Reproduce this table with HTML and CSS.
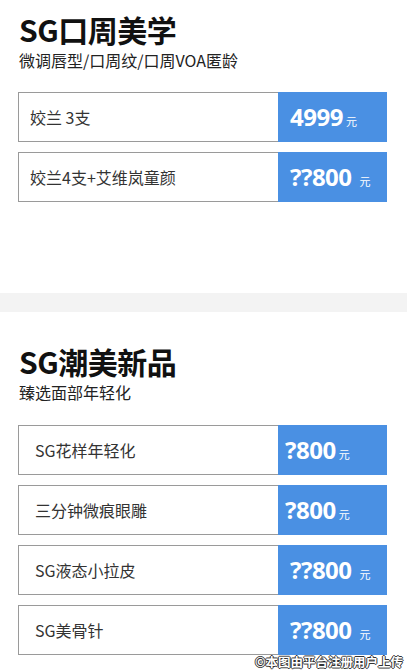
FILE: index.html
```html
<!DOCTYPE html>
<html lang="zh">
<head>
<meta charset="utf-8">
<link rel="stylesheet" href="styles.css">
</head>
<body>
<div class="page">
  <section class="sec sec-1">
    <h1 class="title">SG口周美学</h1>
    <p class="sub">微调唇型/口周纹/口周VOA匿龄</p>
    <div class="list">
      <div class="row"><div class="name">姣兰 3支</div><div class="price"><span class="num">4999</span><span class="unit">元</span></div></div>
      <div class="row"><div class="name">姣兰4支+艾维岚童颜</div><div class="price"><span class="num">??800</span><span class="unit sp">元</span></div></div>
    </div>
  </section>
  <div class="band"></div>
  <section class="sec sec-2">
    <h1 class="title">SG潮美新品</h1>
    <p class="sub">臻选面部年轻化</p>
    <div class="list list-2">
      <div class="row"><div class="name">SG花样年轻化</div><div class="price p2"><span class="num">?800</span><span class="unit">元</span></div></div>
      <div class="row"><div class="name">三分钟微痕眼雕</div><div class="price p2"><span class="num">?800</span><span class="unit">元</span></div></div>
      <div class="row"><div class="name">SG液态小拉皮</div><div class="price"><span class="num">??800</span><span class="unit sp">元</span></div></div>
      <div class="row"><div class="name">SG美骨针</div><div class="price"><span class="num">??800</span><span class="unit sp">元</span></div></div>
    </div>
  </section>
  <div class="wm">©本图由平台注册用户上传</div>
</div>
</body>
</html>
```
FILE: styles.css
```css
* { box-sizing: border-box; }
html, body { margin: 0; padding: 0; background: #fff; }
body {
  width: 407px;
  height: 670px;
  overflow: hidden;
  font-family: "Noto Sans CJK SC", "Noto Sans", sans-serif;
  color: #222;
}
.page { position: relative; width: 407px; height: 670px; }
.sec { padding: 0 20px 0 18px; }
.sec-1 { padding-top: 9px; }
.sec-2 { padding-top: 29px; }
.title {
  margin: 0 0 0 1px;
  font-size: 30px;
  line-height: 40px;
  font-weight: 700;
  color: #111;
  letter-spacing: -0.5px;
}
.sub {
  margin: 0 0 0 1px;
  font-size: 16px;
  line-height: 22px;
  color: #222;
}
.list { display: flex; flex-direction: column; gap: 10px; margin-top: 21px; }
.list-2 { margin-top: 22px; gap: 10px; }
.row { display: flex; height: 50px; width: 369px; }
.name {
  flex: 1;
  border: 1px solid #9a9a9a;
  border-right: none;
  display: flex;
  align-items: center;
  padding-left: 11px;
  font-size: 16px;
  color: #333;
}
.list-2 .name { padding-left: 16px; }
.price {
  width: 109px;
  background: #4a90e3;
  color: #fff;
  display: flex;
  align-items: baseline;
  padding: 10px 0 0 12px;
}
.price.p2 { padding-left: 7px; }
.num {
  font-family: "Open Sans", "Noto Sans", sans-serif;
  font-weight: 700;
  font-size: 24px;
  letter-spacing: -0.5px;
  line-height: 30px;
}
.unit { font-size: 11px; margin-left: 3px; }
.unit.sp { margin-left: 8px; }
.band { height: 19px; background: #f3f3f3; margin-top: 91px; }
.wm {
  position: absolute;
  right: 4px;
  bottom: 0;
  font-size: 12.5px;
  line-height: 16px;
  color: #fff;
  font-weight: 700;
  text-shadow: -1px 0 #333, 1px 0 #333, 0 -1px #333, 0 1px #333;
}
```
